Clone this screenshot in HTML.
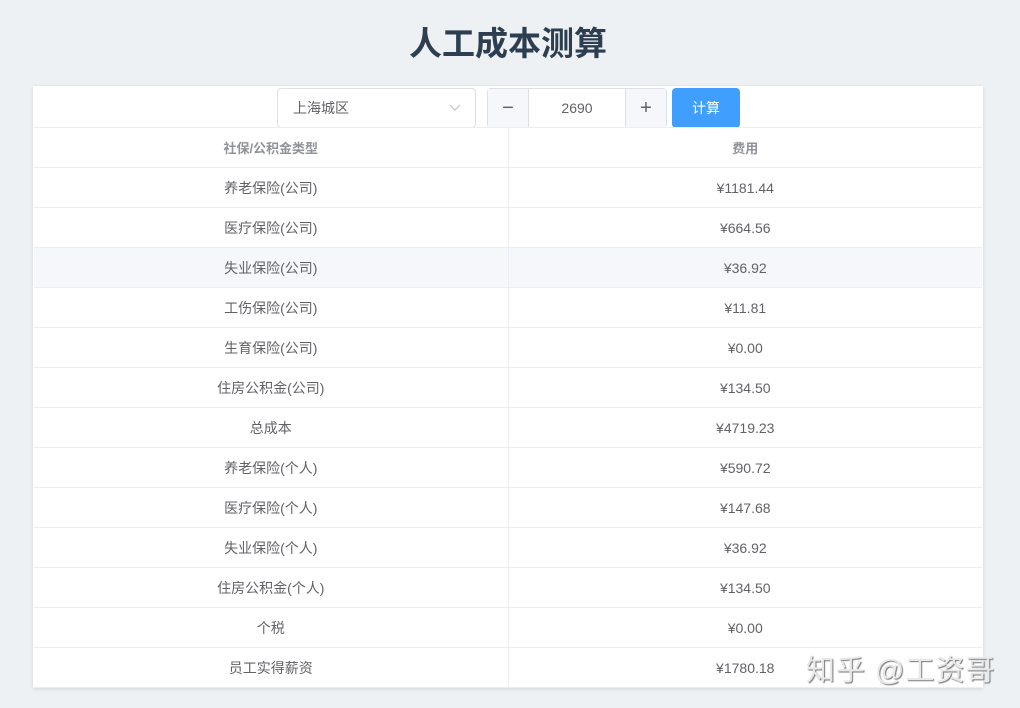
<!DOCTYPE html>
<html><head><meta charset="utf-8"><style>
body{margin:0;background:#eef1f4;font-family:"Liberation Sans","Noto Sans CJK SC",sans-serif;width:1020px;height:708px;overflow:hidden;position:relative}
h1{position:absolute;top:22px;left:0;width:1016px;text-align:center;margin:0;font-size:33px;color:#2c3e50;font-weight:bold;line-height:44px}
.card{position:absolute;left:33px;top:86px;width:950px;height:602px;background:#fff;box-shadow:0 1px 4px rgba(0,0,0,.12)}
.sel{position:absolute;left:244px;top:2px;width:199px;height:40px;border:1px solid #dcdfe6;border-radius:4px;box-sizing:border-box;font-size:14px;color:#606266;line-height:38px;padding-left:15px}
.sel svg{position:absolute;right:14px;top:15px}
.num{position:absolute;left:454px;top:2px;width:180px;height:40px;border:1px solid #dcdfe6;border-radius:4px;box-sizing:border-box;font-size:14px;color:#606266}
.num .m,.num .p{position:absolute;top:0;width:40px;height:38px;background:#f5f7fa;text-align:center;line-height:38px;font-size:20px;color:#606266;font-weight:300}
.num .m{left:0;border-right:1px solid #dcdfe6}.num .p{right:0;border-left:1px solid #dcdfe6}
.num .v{position:absolute;left:41px;right:41px;text-align:center;line-height:38px}
.btn{position:absolute;left:639px;top:2px;width:68px;height:40px;background:#409eff;border-radius:4px;color:#fff;font-size:14px;text-align:center;line-height:40px}
table{position:absolute;top:41px;left:1px;width:948px;border-collapse:collapse;font-size:14px;color:#606266;border-top:1px solid #ebeef5}
td,th{height:39px;border-bottom:1px solid #ebeef5;text-align:center;padding:0;width:50%}
td:first-child,th:first-child{border-right:1px solid #ebeef5}
th{color:#909399;font-weight:bold;font-size:13px}
tr.h td{background:#f5f7fa}
.wm{position:absolute;left:806px;top:647px;font-size:29px;color:#e8e8e8;text-shadow:1px 1px 1px #777;letter-spacing:1px}
</style></head><body>
<h1>人工成本测算</h1>
<div class="card">
<div class="sel">上海城区<svg width="12" height="8" viewBox="0 0 12 8"><path d="M1 1l5 5 5-5" fill="none" stroke="#c0c4cc" stroke-width="1.2"/></svg></div>
<div class="num"><div class="m">−</div><div class="v">2690</div><div class="p">+</div></div>
<div class="btn">计算</div>
<table>
<tr><th>社保/公积金类型</th><th>费用</th></tr>
<tr><td>养老保险(公司)</td><td>¥1181.44</td></tr>
<tr><td>医疗保险(公司)</td><td>¥664.56</td></tr>
<tr class="h"><td>失业保险(公司)</td><td>¥36.92</td></tr>
<tr><td>工伤保险(公司)</td><td>¥11.81</td></tr>
<tr><td>生育保险(公司)</td><td>¥0.00</td></tr>
<tr><td>住房公积金(公司)</td><td>¥134.50</td></tr>
<tr><td>总成本</td><td>¥4719.23</td></tr>
<tr><td>养老保险(个人)</td><td>¥590.72</td></tr>
<tr><td>医疗保险(个人)</td><td>¥147.68</td></tr>
<tr><td>失业保险(个人)</td><td>¥36.92</td></tr>
<tr><td>住房公积金(个人)</td><td>¥134.50</td></tr>
<tr><td>个税</td><td>¥0.00</td></tr>
<tr><td>员工实得薪资</td><td>¥1780.18</td></tr>
</table>
</div>
<div class="wm">知乎 @工资哥</div>
</body></html>
